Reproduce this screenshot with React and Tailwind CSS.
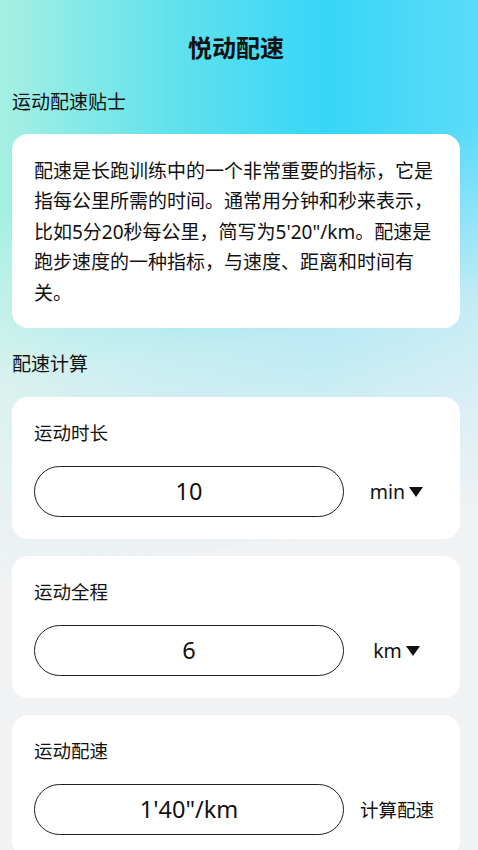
import React, { useState } from 'react';

const Arrow = () => (
    <svg width="16" height="12" viewBox="0 0 16 12" className="ml-[3px]">
        <path d="M1 1 H15 L8 11 Z" fill="#111" />
    </svg>
);

const CalcCard = ({ label, value, right }) => (
    <div className="bg-white rounded-[16px] pl-[22px] pr-[10px] pt-[24px] pb-[22px]">
        <div className="text-[18.5px] leading-[24px] text-[#111]">{label}</div>
        <div className="flex items-center mt-[21px]">
            <div className="w-[310px] h-[51px] rounded-full border-[1.5px] border-[#1f1f1f] flex items-center justify-center text-[23.5px] text-[#111]">
                {value}
            </div>
            <div className="flex-1 flex items-center justify-center text-[19.5px] text-[#111]">
                {right}
            </div>
        </div>
    </div>
);

export default function App() {
    const [minutes] = useState('10');
    const [distance] = useState('6');

    return (
        <div
            className="min-h-screen w-full bg-[linear-gradient(170deg,rgba(241,242,244,0)_0%,rgba(241,242,244,0)_22%,rgba(241,242,244,0.7)_40%,#f1f2f4_62%),linear-gradient(to_right,#a6f0e2_0%,#63e2ec_35%,#36d6f8_68%,#5cdbf9_100%)] pl-[12px] pr-[18px] pb-[20px]"
            style={{ fontFamily: '"Noto Sans", "Noto Sans CJK SC", sans-serif' }}
        >
            <h1 className="pt-[32px] leading-[32px] text-center text-[24px] font-bold text-[#111]">悦动配速</h1>

            <div className="mt-[26px] text-[19px] leading-[24px] text-[#111]">运动配速贴士</div>

            <div className="mt-[20px] bg-white rounded-[16px] px-[22px] pt-[22px] pb-[20px] text-[19px] leading-[30.4px] text-[#111]">
                配速是长跑训练中的一个非常重要的指标，它是指每公里所需的时间。通常用分钟和秒来表示，比如5分20秒每公里，简写为5'20"/km。配速是跑步速度的一种指标，与速度、距离和时间有关。
            </div>

            <div className="mt-[24px] text-[19px] leading-[24px] text-[#111]">配速计算</div>

            <div className="mt-[21px] flex flex-col gap-[17px]">
                <CalcCard
                    label="运动时长"
                    value={minutes}
                    right={<>min<Arrow /></>}
                />
                <CalcCard
                    label="运动全程"
                    value={distance}
                    right={<>km<Arrow /></>}
                />
                <CalcCard
                    label="运动配速"
                    value={`1'40"/km`}
                    right={<span className="text-[18.5px]">计算配速</span>}
                />
            </div>
        </div>
    );
}
